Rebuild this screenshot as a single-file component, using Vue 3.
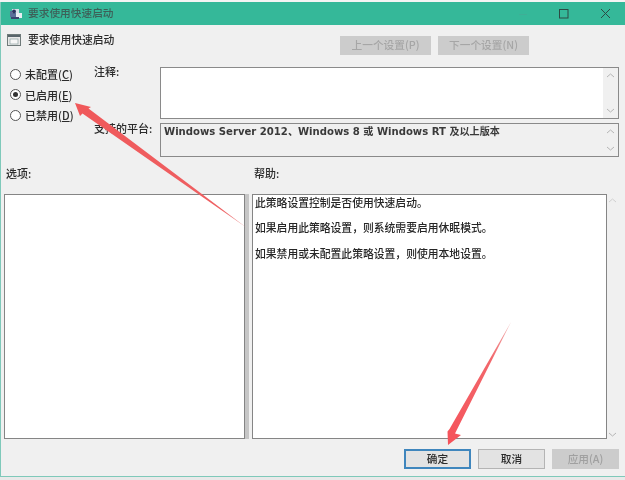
<script setup>
const radios = [
  { label: '未配置(', key: 'C', checked: false },
  { label: '已启用(', key: 'E', checked: true },
  { label: '已禁用(', key: 'D', checked: false },
]
const helpLines = [
  '此策略设置控制是否使用快速启动。',
  '如果启用此策略设置\uFF0C则系统需要启用休眠模式。',
  '如果禁用或未配置此策略设置\uFF0C则使用本地设置。',
]
</script>

<template>
  <div class="page">
    <div class="topstrip"></div>
    <div class="window">
      <header class="titlebar">
        <svg class="appicon" width="14" height="12" viewBox="0 0 14 12">
          <rect x="1" y="3" width="9" height="6" fill="#5b6f9a" />
          <rect x="3" y="1" width="7" height="4" fill="#d8dde8" />
          <circle cx="5" cy="3.500" r="2" fill="#2c3560" />
          <rect x="7" y="5" width="6" height="5" fill="#e9edf3" />
          <rect x="2" y="9" width="8" height="2" fill="#3b4470" />
        </svg>
        <span class="title-text">要求使用快速启动</span>
        <div class="controls">
          <svg width="10" height="10" viewBox="0 0 10 10" class="ctl-min"><path d="M1 5.500H9" stroke="#3fae96" stroke-width="1" /></svg>
          <svg width="10" height="10" viewBox="0 0 10 10" class="ctl-max"><rect x="0.500" y="0.500" width="8.500" height="8.500" fill="none" stroke="#2d4a44" stroke-width="1" /></svg>
          <svg width="11" height="11" viewBox="0 0 11 11" class="ctl-close"><path d="M1 1L10 10M10 1L1 10" stroke="#2d4a44" stroke-width="1" /></svg>
        </div>
      </header>

      <div class="heading-row">
        <div class="heading">
          <svg width="15" height="13" viewBox="0 0 15 13">
            <rect x="0.500" y="0.500" width="13" height="11" fill="#e8e8e8" stroke="#6f7a7a" />
            <rect x="1" y="1" width="12" height="2" fill="#58646a" />
            <rect x="3" y="5" width="8" height="5" fill="#f6f6f6" stroke="#8fa3a3" stroke-width="0.700" />
          </svg>
          <span class="heading-text">要求使用快速启动</span>
        </div>
        <div class="nav">
          <button class="btn btn-nav" disabled>上一个设置(P)</button>
          <button class="btn btn-nav" disabled>下一个设置(N)</button>
        </div>
      </div>

      <div class="config">
        <div class="radios">
          <label v-for="r in radios" :key="r.key" class="radio">
            <span class="dot" :class="{ on: r.checked }"></span>
            <span>{{ r.label }}<u>{{ r.key }}</u>)</span>
          </label>
        </div>
        <div class="fields">
          <div class="field field-note">
            <span class="field-label">注释:</span>
            <div class="box">
              <div class="box-body"></div>
              <div class="scroll">
                <svg width="9" height="5" viewBox="0 0 9 5"><path d="M1 4L4.500 1L8 4" fill="none" stroke="#b5b5b5" /></svg>
                <svg width="9" height="5" viewBox="0 0 9 5"><path d="M1 1L4.500 4L8 1" fill="none" stroke="#b5b5b5" /></svg>
              </div>
            </div>
          </div>
          <div class="field field-platform">
            <span class="field-label">支持的平台:</span>
            <div class="box box-grey">
              <div class="box-body platform-text">Windows Server 2012、Windows 8 或 Windows RT 及以上版本</div>
              <div class="scroll">
                <svg width="9" height="5" viewBox="0 0 9 5"><path d="M1 4L4.500 1L8 4" fill="none" stroke="#b5b5b5" /></svg>
                <svg width="9" height="5" viewBox="0 0 9 5"><path d="M1 1L4.500 4L8 1" fill="none" stroke="#b5b5b5" /></svg>
              </div>
            </div>
          </div>
        </div>
      </div>

      <div class="labels">
        <span>选项:</span>
        <span>帮助:</span>
      </div>

      <div class="panes">
        <div class="pane pane-options"></div>
        <div class="divider"></div>
        <div class="pane pane-help">
          <p v-for="line in helpLines" :key="line">{{ line }}</p>
        </div>
        <div class="help-scroll">
          <svg width="9" height="5" viewBox="0 0 9 5"><path d="M1 4L4.500 1L8 4" fill="none" stroke="#d0d0d0" /></svg>
          <svg width="9" height="5" viewBox="0 0 9 5"><path d="M1 1L4.500 4L8 1" fill="none" stroke="#b5b5b5" /></svg>
        </div>
      </div>

      <footer class="footer">
        <button class="btn btn-foot primary">确定</button>
        <button class="btn btn-foot">取消</button>
        <button class="btn btn-foot off" disabled>应用(A)</button>
      </footer>
    </div>

    <svg class="arrows" width="625" height="480" viewBox="0 0 625 480">
      <defs>
        <linearGradient id="fade1" gradientUnits="userSpaceOnUse" x1="75" y1="103" x2="247" y2="228">
          <stop offset="0" stop-color="#f0585a" />
          <stop offset="0.850" stop-color="#ee6062" />
          <stop offset="1" stop-color="#eda0a0" />
        </linearGradient>
        <linearGradient id="fade2" gradientUnits="userSpaceOnUse" x1="448" y1="445" x2="511" y2="322">
          <stop offset="0" stop-color="#f5525a" />
          <stop offset="0.700" stop-color="#f2686c" />
          <stop offset="1" stop-color="#f0b0b0" />
        </linearGradient>
      </defs>
      <path d="M75 103L91 107L88.500 108.500L247 228L82.500 113.500L80 116Z" fill="url(#fade1)" />
      <path d="M448 445L461 435L455 433.500L511 322L449.500 429L447.500 431.500Z" fill="url(#fade2)" />
    </svg>
  </div>
</template>

<style>
html, body { margin: 0; background: #fff; }
</style>

<style scoped>
.page {
  position: relative;
  width: 625px;
  height: 480px;
  overflow: hidden;
  background: #e9e9e9;
  font-family: "Noto Sans CJK SC", "Liberation Sans", sans-serif;
  font-size: 11px;
  font-weight: 500;
  color: #2b2b2b;
  filter: blur(0.35px);
}
.topstrip { height: 2px; background: #f4f4f4; }
.window {
  box-sizing: border-box;
  width: 625px;
  height: 475px;
  background: #f0f0f0;
  border-left: 1px solid #7fc9ba;
  border-bottom: 1px solid #7fc9ba;
  display: flex;
  flex-direction: column;
}
.titlebar {
  height: 23px;
  flex: none;
  background: #35b899;
  display: flex;
  align-items: center;
  padding-left: 8px;
  color: #3d5f58;
}
.appicon { margin-right: 5px; }
.title-text { font-size: 10.700px; margin-bottom: 2px; }
.controls {
  margin-left: auto;
  display: flex;
  align-items: center;
}
.ctl-min { margin-right: 31px; }
.ctl-max { margin-right: 31px; }
.ctl-close { margin-right: 14px; }

.heading-row {
  height: 42px;
  flex: none;
  display: flex;
  align-items: center;
  box-sizing: border-box;
  padding: 0 96px 0 6px;
  justify-content: space-between;
}
.heading { display: flex; align-items: center; gap: 6px; margin-top: -12px; }
.heading-text { margin-bottom: 2px; font-size: 10.800px; }
.nav { display: flex; gap: 7px; margin-top: -2px; }
.btn {
  font-family: inherit;
  font-size: 10.700px;
  font-weight: 500;
  padding: 0;
  box-sizing: border-box;
  border: 1px solid #adadad;
  background: #e1e1e1;
  color: #2b2b2b;
}
.btn-nav {
  width: 91px;
  height: 19px;
  line-height: 16px;
  background: #cccccc;
  border-color: #cccccc;
  color: #a6a6a6;
}

.config { display: flex; height: 90px; flex: none; }
.radios {
  width: 93px;
  flex: none;
  display: flex;
  flex-direction: column;
  gap: 6.500px;
  padding: 0 0 0 9px;
  box-sizing: border-box;
}
.radio { display: flex; align-items: center; gap: 4px; height: 14px; font-size: 11px; }
.dot {
  width: 9px;
  height: 9px;
  border: 1px solid #555;
  border-radius: 50%;
  background: #fff;
  display: flex;
  align-items: center;
  justify-content: center;
}
.dot.on::after {
  content: "";
  width: 5px;
  height: 5px;
  border-radius: 50%;
  background: #333;
}
.fields { flex: 1; display: flex; flex-direction: column; gap: 4px; padding-right: 6px; }
.field { display: flex; }
.field-note { height: 53px; }
.field-platform { height: 34px; }
.field-label { width: 66px; flex: none; margin-top: -3px; line-height: 14px; }
.field-platform .field-label { margin-top: -2px; }
.box {
  flex: 1;
  display: flex;
  box-sizing: border-box;
  border: 1px solid #8a8a8a;
  background: #fff;
}
.box-grey { background: #f0f0f0; }
.box-body { flex: 1; min-width: 0; }
.platform-text {
  padding: 1px 0 0 3px;
  font-family: "DejaVu Sans", "Noto Sans CJK SC", sans-serif;
  font-weight: 700;
  font-size: 10.100px;
  line-height: 14px;
  white-space: nowrap;
  color: #3a3a3a;
}
.scroll {
  width: 15px;
  background: #f0f0f0;
  display: flex;
  flex-direction: column;
  justify-content: space-between;
  align-items: center;
  padding: 5px 0;
  box-sizing: border-box;
}

.labels {
  height: 37px;
  flex: none;
  display: flex;
  padding: 9px 0 0 5px;
  box-sizing: border-box;
  line-height: 14px;
}
.labels span:first-child { width: 248px; }

.panes { display: flex; height: 245px; flex: none; padding-left: 3px; }
.pane {
  box-sizing: border-box;
  border: 1px solid #858585;
  background: #fff;
}
.pane-options { width: 241px; }
.divider { width: 7px; background: linear-gradient(90deg, #c6c6c6 0 4px, #f0f0f0 4px); }
.pane-help { width: 355px; padding: 0 0 0 2px; font-size: 10.800px; }
.pane-help p { margin: 0 0 11.300px; line-height: 14px; color: #262626; }
.help-scroll {
  flex: 1;
  display: flex;
  flex-direction: column;
  justify-content: space-between;
  align-items: center;
  padding: 4px 8px 2px 0;
}

.footer {
  flex: 1;
  display: flex;
  gap: 7px;
  justify-content: flex-end;
  padding: 10px 6px 0 0;
  box-sizing: border-box;
}
.btn-foot { width: 67px; height: 20px; border-color: #b4b4b4; background: #e3e3e3; line-height: 16px; }
.primary { border: 2px solid #3f86bd; }
.off { background: #cccccc; border-color: #cccccc; color: #a0a0a0; }

.arrows { position: absolute; left: 0; top: 0; pointer-events: none; }
</style>
